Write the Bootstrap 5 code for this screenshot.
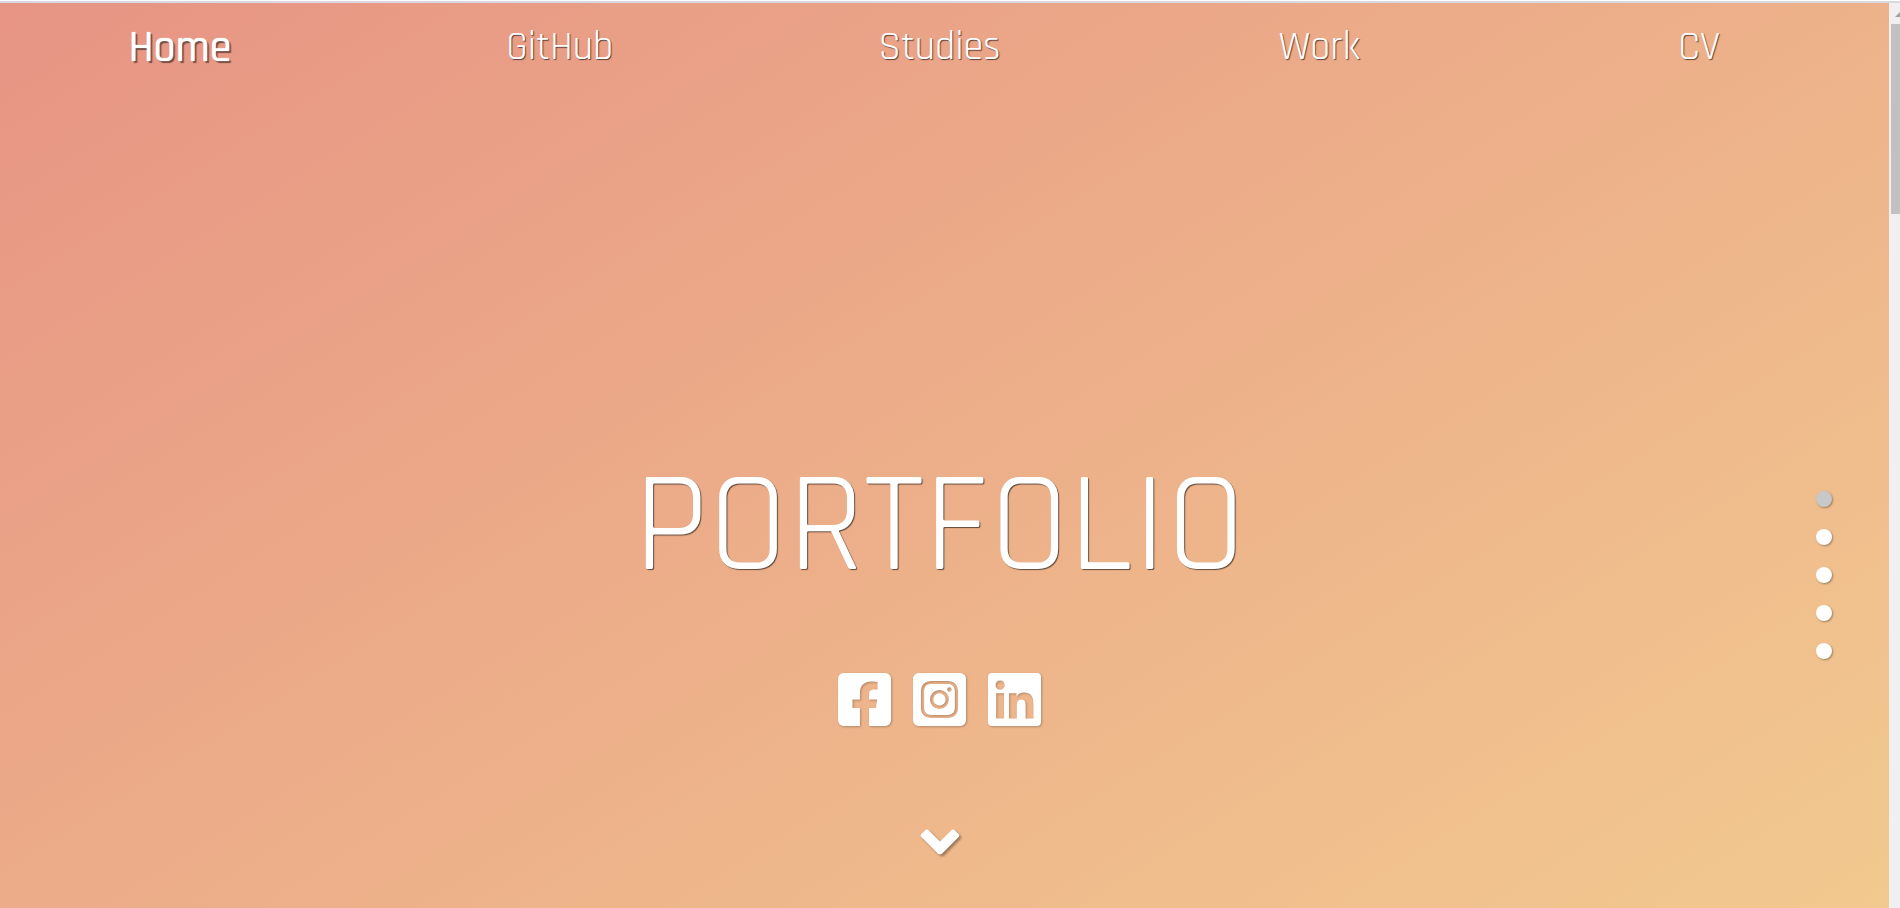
<!DOCTYPE html>
<html lang="en">
<head>
<meta charset="utf-8">
<meta name="viewport" content="width=device-width, initial-scale=1">
<title>Portfolio</title>
<link href="https://cdn.jsdelivr.net/npm/bootstrap@5.3.0/dist/css/bootstrap.min.css" rel="stylesheet">
<style>
  body { font-family: Rajdhani, Roboto, "Liberation Sans", sans-serif; background: #fff; }
  .page-frame { border-top: 2px solid #d7dbe1; margin-top: 1px; height: calc(100vh - 1px); }
  .hero { background: linear-gradient(148deg, #e79484, #f2c98f); }
  /* content runs slightly past the left edge of the window */
  .hero-inner { margin-left: -10px; }
  .site-nav { height: 88px; line-height: 58px; }
  .site-nav a { font-size: 40px; font-weight: 400; text-shadow: 1px 1px 1px rgba(0,0,0,.6); }
  .site-nav a.active { font-size: 44px; font-weight: 500; text-shadow: 0 0 1px #fff, 2px 2px 1px rgba(0,0,0,.5); }
  .hero-title { font-size: 143px; line-height: 132px; font-weight: 400; text-shadow: 1px 1px 1px rgba(0,0,0,.6); }
  .social { gap: 22px; margin-top: 80px; }
  .social svg { width: 53px; height: 53px; filter: drop-shadow(1px 1px 1px rgba(0,0,0,.25)); }
  .next-link { margin-top: 103px; margin-bottom: 53px; }
  .next-link svg { width: 40px; height: 26px; filter: drop-shadow(2px 2px 1px rgba(0,0,0,.35)); }
  .dots { right: 57px; bottom: 249px; gap: 22px; }
  .dots button { width: 16px; height: 16px; background: #fff; box-shadow: 1px 1px 2px rgba(0,0,0,.35); }
  .dots button.active { background: #c8c8c8; }
  .scroll-rail { width: 11px; background: #f0f0f0; padding: 21px 0 0 2px; }
  .scroll-thumb { height: 190px; background: #c1c1c1; }
  .scroll-up { top: 9px; right: 0; }
</style>
</head>
<body>
<div class="page-frame d-flex overflow-hidden">
  <div class="hero flex-grow-1 position-relative overflow-hidden">
    <div class="hero-inner d-flex flex-column h-100">
      <nav class="site-nav row g-0 row-cols-5 text-center" aria-label="Main">
        <div class="col pt-3"><a class="active text-white text-decoration-none" href="#home" aria-current="page">Home</a></div>
        <div class="col pt-3"><a class="text-white text-decoration-none" href="#github">GitHub</a></div>
        <div class="col pt-3"><a class="text-white text-decoration-none" href="#studies">Studies</a></div>
        <div class="col pt-3"><a class="text-white text-decoration-none" href="#work">Work</a></div>
        <div class="col pt-3"><a class="text-white text-decoration-none" href="#cv">CV</a></div>
      </nav>
      <main class="flex-grow-1 d-flex flex-column align-items-center justify-content-end text-white" id="home">
        <h1 class="hero-title mb-0">PORTFOLIO</h1>
        <div class="social d-flex">
          <a class="d-flex text-white" href="#facebook" aria-label="Facebook"><svg viewBox="0 32 448 448" fill="currentColor"><path d="M400 32H48A48 48 0 0 0 0 80v352a48 48 0 0 0 48 48h137.25V327.69h-63V256h63v-54.64c0-62.15 37-96.48 93.67-96.48 27.14 0 55.52 4.84 55.52 4.84v61h-31.27c-30.81 0-40.42 19.12-40.42 38.73V256h68.78l-11 71.69h-57.78V480H400a48 48 0 0 0 48-48V80a48 48 0 0 0-48-48z"/></svg></a>
          <a class="d-flex text-white" href="#instagram" aria-label="Instagram"><svg viewBox="0 32 448 448" fill="currentColor" fill-rule="evenodd"><path d="M48 32H400A48 48 0 0 1 448 80V432A48 48 0 0 1 400 480H48A48 48 0 0 1 0 432V80A48 48 0 0 1 48 32ZM160 99C100 99 67 128 67 192V320C67 384 100 413 160 413H288C348 413 381 384 381 320V192C381 128 348 99 288 99Z"/><path d="M160 125H288C334 125 354 146 354 192V320C354 366 334 387 288 387H160C114 387 94 366 94 320V192C94 146 114 125 160 125ZM224 176A80 80 0 1 0 224 336A80 80 0 1 0 224 176ZM308 152A19 19 0 1 0 308 190A19 19 0 1 0 308 152Z"/><circle cx="224" cy="256" r="52"/></svg></a>
          <a class="d-flex text-white" href="#linkedin" aria-label="LinkedIn"><svg viewBox="0 32 448 448" fill="currentColor"><path d="M416 32H31.9C14.3 32 0 46.5 0 64.3v383.4C0 465.5 14.3 480 31.9 480H416c17.6 0 32-14.5 32-32.3V64.3c0-17.8-14.4-32.3-32-32.3zM135.4 416H69V202.2h66.5V416zm-33.2-243c-21.3 0-38.5-17.3-38.5-38.5S80.9 96 102.2 96c21.2 0 38.5 17.3 38.5 38.5 0 21.3-17.2 38.5-38.5 38.5zm282.1 243h-66.4V312c0-24.8-.5-56.7-34.5-56.7-34.6 0-39.9 27-39.9 54.9V416h-66.4V202.2h63.7v29.2h.9c8.9-16.8 30.6-34.5 62.9-34.5 67.2 0 79.7 44.3 79.7 101.9V416z"/></svg></a>
        </div>
        <a class="next-link d-flex text-white" href="#github" aria-label="Next section"><svg viewBox="0 0 40 26" fill="currentColor"><path d="M17.800 24.400L1.400 8Q0 6.500 1.400 5L5.400 1.200Q7 -.2 8.500 1.200L20 12.500L31.500 1.200Q33 -.2 34.600 1.200L38.600 5Q40 6.500 38.600 8L22.200 24.400Q20 26.200 17.800 24.400Z"/></svg></a>
      </main>
    </div>
    <div class="dots position-absolute d-flex flex-column">
      <button type="button" class="active border-0 p-0 rounded-circle" aria-label="Home"></button>
      <button type="button" class="border-0 p-0 rounded-circle" aria-label="GitHub"></button>
      <button type="button" class="border-0 p-0 rounded-circle" aria-label="Studies"></button>
      <button type="button" class="border-0 p-0 rounded-circle" aria-label="Work"></button>
      <button type="button" class="border-0 p-0 rounded-circle" aria-label="CV"></button>
    </div>
  </div>
  <div class="scroll-rail position-relative flex-shrink-0" aria-hidden="true">
    <svg class="scroll-up position-absolute" width="5" height="5"><path d="M0 5L5 0V5Z" fill="#a0a0a0"/></svg>
    <div class="scroll-thumb"></div>
  </div>
</div>
<script src="https://cdn.jsdelivr.net/npm/bootstrap@5.3.0/dist/js/bootstrap.bundle.min.js"></script>
</body>
</html>
